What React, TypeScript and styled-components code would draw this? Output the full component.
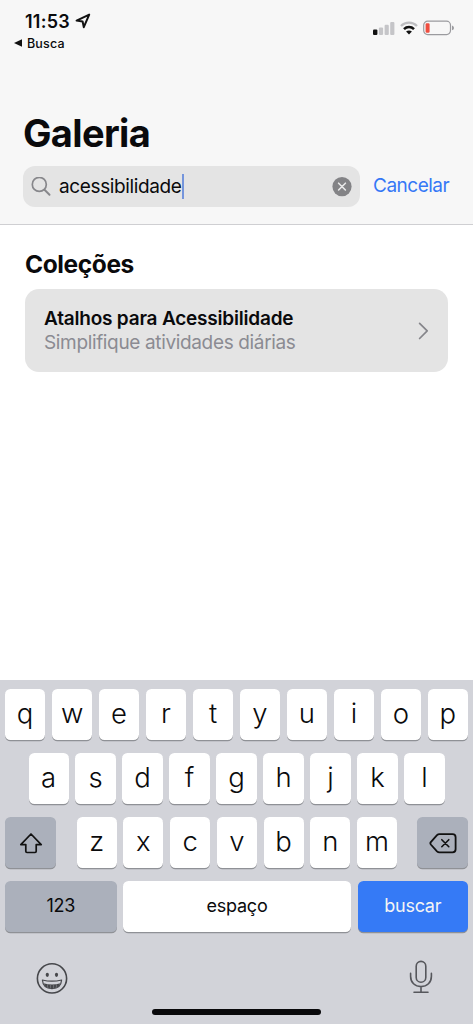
import React from 'react';
import styled, { createGlobalStyle } from 'styled-components';

const GlobalStyle = createGlobalStyle`
  * { box-sizing: border-box; }
  body { margin: 0; background: #fff; }
  svg { display: block; flex: none; }
`;

const Screen = styled.div`
  width: 473px;
  height: 1024px;
  display: flex;
  flex-direction: column;
  overflow: hidden;
  background: #fff;
  color: #0a0a0c;
  font-family: Inter, "Liberation Sans", sans-serif;
`;

const Header = styled.header`
  height: 225px;
  flex: none;
  background: #f7f7f7;
  border-bottom: 1px solid #cfcfd2;
`;

const StatusBar = styled.div`
  height: 110px;
  padding: 11px 19px 0 14px;
  display: flex;
  justify-content: space-between;
`;

const Clock = styled.div`
  display: flex;
  align-items: center;
  gap: 5px;
  height: 20px;
  padding-left: 11px;
  font-size: 18px;
  font-weight: 600;
  letter-spacing: 0.25px;
`;

const BackLink = styled.div`
  display: flex;
  align-items: center;
  gap: 5px;
  height: 16px;
  margin-top: 4px;
  font-size: 12.5px;
  font-weight: 500;
  letter-spacing: 0.15px;
`;

const StatusIcons = styled.div`
  display: flex;
  gap: 5px;
  height: 16px;
  margin-top: 9px;
  align-items: center;
`;

const Title = styled.h1`
  margin: 0 0 0 23px;
  height: 46px;
  line-height: 46px;
  font-size: 38px;
  font-weight: 700;
  letter-spacing: -0.65px;
`;

const SearchRow = styled.div`
  display: flex;
  align-items: center;
  margin: 10px 0 0 23px;
`;

const SearchField = styled.div`
  display: flex;
  align-items: center;
  width: 337px;
  height: 41px;
  padding: 0 8px;
  border-radius: 12px;
  background: #e4e4e4;
`;

const Query = styled.span`
  margin-left: 8px;
  font-size: 19px;
  letter-spacing: -0.37px;
  color: #0a0a0c;
`;

const Caret = styled.span`
  width: 2px;
  height: 25px;
  margin-right: auto;
  background: #7595dc;
`;

const Cancel = styled.span`
  margin-left: 13px;
  padding-bottom: 2px;
  font-size: 19px;
  letter-spacing: -0.5px;
  color: #3578f6;
`;

const Results = styled.main`
  flex: 1;
  padding: 24px 25px 0;
`;

const SectionTitle = styled.h2`
  margin: 0 0 10px;
  height: 30px;
  line-height: 30px;
  font-size: 24.5px;
  font-weight: 700;
  letter-spacing: -0.4px;
`;

const Card = styled.div`
  display: flex;
  align-items: center;
  justify-content: space-between;
  height: 83px;
  padding: 0 19px;
  border-radius: 14px;
  background: #e4e4e4;
`;

const CardTitle = styled.div`
  line-height: 24px;
  font-size: 19px;
  font-weight: 600;
  letter-spacing: -0.2px;
`;

const CardText = styled.div`
  line-height: 23px;
  font-size: 19px;
  letter-spacing: -0.35px;
  color: #8b8b92;
`;

const Keyboard = styled.section`
  height: 344px;
  flex: none;
  display: flex;
  flex-direction: column;
  padding-top: 9px;
  background: #d2d3d9;
`;

const KeyRow = styled.div<{ $inset?: number }>`
  display: flex;
  gap: 6.7px;
  height: 51px;
  margin-bottom: 13px;
  padding: 0 ${p => 5 + (p.$inset ?? 0)}px;
`;

const Letters = styled.div`
  display: flex;
  gap: 6.7px;
  flex: 1;
  margin: 0 13.2px 0 13.9px;
`;

type Tone = 'light' | 'dark' | 'blue';
const fills: Record<Tone, string> = { light: '#fff', dark: '#abb0bb', blue: '#357af6' };

const Key = styled.div<{ $tone?: Tone; $width?: number; $label?: boolean; $icon?: boolean }>`
  display: flex;
  align-items: center;
  justify-content: center;
  flex: ${p => (p.$width ? `0 0 ${p.$width}px` : '1 1 0')};
  min-width: 0;
  height: 51px;
  padding-top: ${p => (p.$icon ? 2 : 0)}px;
  padding-bottom: ${p => (p.$icon ? 0 : p.$label ? 2 : 4)}px;
  border-radius: 5.5px;
  background: ${p => fills[p.$tone ?? 'light']};
  box-shadow: 0 1.3px 0 #8f9196;
  color: ${p => (p.$tone === 'blue' ? '#f4f4f4' : '#0a0a0c')};
  font-size: ${p => (p.$label ? 18 : 27.5)}px;
  font-weight: ${p => (p.$label ? 400 : 340)};
  letter-spacing: ${p => (p.$label ? -0.25 : 0)}px;
`;

const BottomBar = styled.div`
  display: flex;
  justify-content: space-between;
  height: 64px;
  padding: 15px 40px 0 36px;
`;

const HomeIndicator = styled.div`
  width: 169px;
  height: 6px;
  border-radius: 3px;
  margin: 0 auto;
  background: #09090b;
`;

const LocationIcon = () => (
  <svg width="16" height="16" viewBox="0 0 16 16" fill="none" stroke="#111" strokeWidth="2" strokeLinejoin="round">
    <path d="M14.2 1.6 1.6 7.6 7.6 8.4 8.8 14.2Z" />
  </svg>
);

const SignalIcon = () => (
  <svg width="22" height="14" viewBox="0 0 22 14">
    <rect x="0" y="8.5" width="4.4" height="5.5" rx="1.1" fill="#111" />
    <rect x="5.9" y="6.5" width="4.2" height="7.5" rx="1.1" fill="#c5c5c8" />
    <rect x="11.6" y="3.8" width="4.2" height="10.2" rx="1.1" fill="#c5c5c8" />
    <rect x="17.2" y="1" width="4.2" height="13" rx="1.1" fill="#c5c5c8" />
  </svg>
);

const WifiIcon = () => (
  <svg width="18" height="14" viewBox="0 0 18 14" fill="none">
    <path d="M1 5C5.4.5 12.6.5 17 5" stroke="#bdbdc0" strokeWidth="2.3" />
    <path d="M4 8.1C6.8 5.3 11.2 5.3 14 8.1" stroke="#111" strokeWidth="2.5" />
    <path d="M6.1 10.5C7.8 9 10.2 9 11.9 10.5L9 13.4Z" fill="#111" />
  </svg>
);

const BatteryIcon = () => (
  <svg width="31" height="16" viewBox="0 0 31 16">
    <rect x=".7" y="1.2" width="26.8" height="13.4" rx="4" fill="none" stroke="#9b9b9f" strokeWidth="1.2" />
    <rect x="2.6" y="3.2" width="4" height="9.6" rx="1.2" fill="#ef4e40" />
    <path d="M29 5.6Q31 6.3 31 8T29 10.3Z" fill="#9b9b9f" />
  </svg>
);

const SearchIcon = () => (
  <svg width="20" height="20" viewBox="0 0 20 20" fill="none" stroke="#87878b" strokeWidth="1.7" strokeLinecap="round">
    <circle cx="8.3" cy="7.4" r="7" />
    <path d="m13.5 12.7 5 5" strokeWidth="2" />
  </svg>
);

const ClearIcon = () => (
  <svg width="20" height="20" viewBox="0 0 20 20">
    <circle cx="10" cy="9.6" r="9.6" fill="#838386" />
    <path d="m6.6 6.2 6.8 6.8m0-6.8-6.8 6.8" stroke="#e9e9e9" strokeWidth="1.6" strokeLinecap="round" />
  </svg>
);

const Chevron = () => (
  <svg width="11" height="18" viewBox="0 0 11 18" fill="none" stroke="#85858a" strokeWidth="1.7" strokeLinecap="round" strokeLinejoin="round">
    <path d="m1.6 1.3 7.6 7.6-7.6 7.6" />
  </svg>
);

const ShiftIcon = () => (
  <svg width="24" height="21" viewBox="0 0 24 21" fill="none" stroke="#111" strokeWidth="1.7" strokeLinejoin="round">
    <path d="M12 1 22.2 11.6H17.2V18.3Q17.2 19.5 16 19.5H8Q6.8 19.5 6.8 18.3V11.6H1.8Z" />
  </svg>
);

const DeleteIcon = () => (
  <svg width="28" height="21" viewBox="0 0 28 21" fill="none" stroke="#111" strokeWidth="1.8" strokeLinejoin="round" strokeLinecap="round">
    <path d="M10.5 1.2H23.5Q26.6 1.2 26.6 4.2V16.3Q26.6 19.3 23.5 19.3H10.5Q9 19.3 8 18.3L1.8 11.5Q.9 10.3 1.8 9.1L8 2.2Q9 1.2 10.5 1.2Z" />
    <path d="m12.8 6.7 7 7m0-7-7 7" strokeWidth="1.6" />
  </svg>
);

const EmojiIcon = () => (
  <svg width="32" height="36" viewBox="0 -2.4 32 36" fill="none" stroke="#46474b">
    <circle cx="16" cy="16" r="14.6" strokeWidth="1.6" />
    <ellipse cx="11.3" cy="12.4" rx="1.6" ry="2.1" fill="#46474b" stroke="none" />
    <ellipse cx="20.5" cy="12.4" rx="1.6" ry="2.1" fill="#46474b" stroke="none" />
    <path d="M6.4 17.6Q16 20 25.6 17.6Q25 26.2 16 26.2T6.4 17.6Z" strokeWidth="1.2" strokeLinejoin="round" />
    <path d="M7.5 20.8Q16 23.2 24.5 20.8Q22.4 26 16 26T7.5 20.8Z" fill="#46474b" stroke="none" />
    <path d="M11.5 22v3.2M14.5 22.4v3.6M17.5 22.4v3.6M20.5 22v3.2" stroke="#85868b" strokeWidth=".6" />
  </svg>
);

const MicIcon = () => (
  <svg width="24" height="34" viewBox="0 0 24 34" fill="none" stroke="#56575c" strokeWidth="1.6" strokeLinecap="round">
    <rect x="7.2" y="1.4" width="9.6" height="20.8" rx="4.8" />
    <path d="M1.6 13.4V16.2C1.6 22.6 6 26.6 12 26.6S22.4 22.6 22.4 16.2V13.4M12 26.6V32.3M5 32.3H19" />
  </svg>
);

const letterKeys = (row: string) => row.split('').map(c => <Key key={c}>{c}</Key>);

export default function App() {
  return (
    <Screen>
      <GlobalStyle />
      <Header>
        <StatusBar>
          <div>
            <Clock>11:53 <LocationIcon /></Clock>
            <BackLink>
              <svg width="8" height="8" viewBox="0 0 8 8"><path d="M0 4 8 .2V7.8Z" fill="#111" /></svg>
              Busca
            </BackLink>
          </div>
          <StatusIcons><SignalIcon /><WifiIcon /><BatteryIcon /></StatusIcons>
        </StatusBar>
        <Title>Galeria</Title>
        <SearchRow>
          <SearchField>
            <SearchIcon />
            <Query>acessibilidade</Query>
            <Caret />
            <ClearIcon />
          </SearchField>
          <Cancel>Cancelar</Cancel>
        </SearchRow>
      </Header>
      <Results>
        <SectionTitle>Coleções</SectionTitle>
        <Card>
          <div>
            <CardTitle>Atalhos para Acessibilidade</CardTitle>
            <CardText>Simplifique atividades diárias</CardText>
          </div>
          <Chevron />
        </Card>
      </Results>
      <Keyboard>
        <KeyRow>{letterKeys('qwertyuiop')}</KeyRow>
        <KeyRow $inset={23.5}>{letterKeys('asdfghjkl')}</KeyRow>
        <KeyRow>
          <Key $tone="dark" $width={51} $icon><ShiftIcon /></Key>
          <Letters>{letterKeys('zxcvbnm')}</Letters>
          <Key $tone="dark" $width={51} $icon><DeleteIcon /></Key>
        </KeyRow>
        <KeyRow>
          <Key $tone="dark" $width={111.5} $label>123</Key>
          <Key $label>espaço</Key>
          <Key $tone="blue" $width={110.5} $label>buscar</Key>
        </KeyRow>
        <BottomBar><EmojiIcon /><MicIcon /></BottomBar>
        <HomeIndicator />
      </Keyboard>
    </Screen>
  );
}
